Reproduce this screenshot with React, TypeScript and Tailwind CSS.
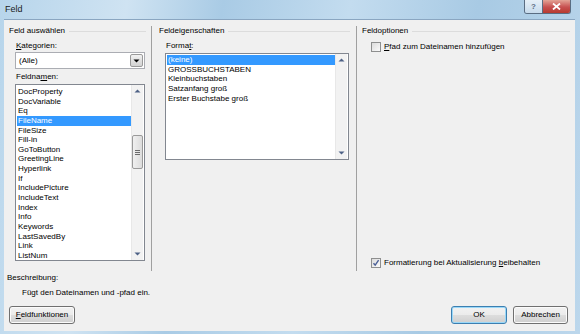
import React from "react";

const fieldNames = [
  "DocProperty",
  "DocVariable",
  "Eq",
  "FileName",
  "FileSize",
  "Fill-in",
  "GoToButton",
  "GreetingLine",
  "Hyperlink",
  "If",
  "IncludePicture",
  "IncludeText",
  "Index",
  "Info",
  "Keywords",
  "LastSavedBy",
  "Link",
  "ListNum",
];

const formats = [
  "(keine)",
  "GROSSBUCHSTABEN",
  "Kleinbuchstaben",
  "Satzanfang groß",
  "Erster Buchstabe groß",
];

function Arrow({ up }: { up?: boolean }) {
  return (
    <svg width="7" height="4" viewBox="0 0 7 4" className="block">
      {up ? (
        <path d="M0.5 3.5 L3.5 0.5 L6.5 3.5 Z" fill="#4d6185" />
      ) : (
        <path d="M0.5 0.5 L3.5 3.5 L6.5 0.5 Z" fill="#4d6185" />
      )}
    </svg>
  );
}

function Header({ text }: { text: string }) {
  return (
    <div className="flex items-center h-[10px] leading-[10px]">
      <span className="pr-[4px] whitespace-nowrap">{text}</span>
      <div className="flex-1 h-px bg-[#dcdcdc]" />
    </div>
  );
}

function CheckBox({ checked }: { checked?: boolean }) {
  return (
    <div className="w-[10px] h-[10px] border border-[#8e8f8f] bg-gradient-to-br from-[#dcdcdc] to-[#fbfbfb] flex items-center justify-center">
      {checked && (
        <svg width="8" height="8" viewBox="0 0 8 8">
          <path d="M1.5 4.2 L3.2 6.2 L6.6 1.2" stroke="#4a5f97" strokeWidth="1.4" fill="none" />
        </svg>
      )}
    </div>
  );
}

function Btn({ children, w, def }: { children: React.ReactNode; w: string; def?: boolean }) {
  return (
    <div
      className={`${w} h-[18px] rounded-[3px] border ${
        def ? "border-[#3c7fb1] shadow-[inset_0_0_0_1px_#9ad8f8]" : "border-[#707070] shadow-[inset_0_0_0_1px_#fbfbfb]"
      } bg-[linear-gradient(to_bottom,#f2f2f2_0%,#ebebeb_50%,#dddddd_51%,#cfcfcf_100%)] flex items-center justify-center leading-none`}
    >
      {children}
    </div>
  );
}

export default function App() {
  return (
    <div
      className="w-[580px] h-[334px] relative overflow-hidden text-[8px] text-black bg-[linear-gradient(100deg,#b7d5eb_0%,#cfe3f2_20%,#a9cbe5_35%,#c3dcef_55%,#a8cae4_75%,#bcd7ec_100%)]"
      style={{ fontFamily: '"Liberation Sans", Arial, sans-serif' }}
    >
      {/* title bar */}
      <div className="h-[19px] flex items-center pl-[5px] text-[9px] text-[#1b1b1b]">Feld</div>
      <div className="absolute top-0 right-[9px] flex h-[14px] rounded-b-[3px] border border-t-0 border-[#5a6d82] overflow-hidden">
        <div className="w-[18px] h-full bg-[linear-gradient(to_bottom,#e6eff7,#c7dbec)] border-r border-[#5a6d82] flex items-center justify-center text-[8px] text-[#5d6f84] font-bold">
          ?
        </div>
        <div className="w-[27px] h-full bg-[linear-gradient(to_bottom,#e3a496,#c75050_55%,#b73a2f)] flex items-center justify-center">
          <svg width="9" height="7" viewBox="0 0 9 7">
            <path d="M1 0.5 L8 6.5 M8 0.5 L1 6.5" stroke="#ffffff" strokeWidth="1.8" />
          </svg>
        </div>
      </div>

      {/* client area */}
      <div className="ml-[4px] w-[571px] h-[312px] bg-[#f0f0f0] border-t border-[#8aa6c1] flex flex-col">
        <div className="mt-[6px] h-[245px] flex">
          {/* column 1 */}
          <div className="w-[147px] flex flex-col pl-[5px] pr-[5px]">
            <Header text="Feld auswählen" />
            <div className="mt-[5px] pl-[7px] h-[10px] leading-[10px]">
              <span className="underline">K</span>ategorien:
            </div>
            <div className="mt-[1px] ml-[6px] w-[130px] h-[17px] bg-white border border-[#abadb3] flex items-center">
              <span className="pl-[3px] flex-1">(Alle)</span>
              <div className="w-[13px] h-[13px] mr-[1px] border border-[#9a9a9a] rounded-[2px] bg-[linear-gradient(to_bottom,#f3f3f3,#e0e0e0_50%,#d3d3d3)] flex items-center justify-center">
                <svg width="7" height="4" viewBox="0 0 7 4">
                  <path d="M0.5 0.5 L3.5 3.5 L6.5 0.5 Z" fill="#000" />
                </svg>
              </div>
            </div>
            <div className="mt-[3px] pl-[7px] h-[10px] leading-[10px]">
              Feldna<span className="underline">m</span>en:
            </div>
            <div className="mt-[2px] ml-[6px] w-[130px] h-[177px] bg-white border border-[#828790] flex">
              <div className="flex-1 pt-[2px] pl-[1px] overflow-hidden">
                {fieldNames.map((n) => (
                  <div
                    key={n}
                    className={`h-[9.65px] leading-[9.65px] pl-[1px] whitespace-nowrap ${
                      n === "FileName" ? "bg-[#3399ff] text-white" : ""
                    }`}
                  >
                    {n}
                  </div>
                ))}
              </div>
              <div className="w-[12px] mr-[1px] bg-[#f2f2f2] border-l border-[#e8e8e8] flex flex-col items-center">
                <div className="h-[12px] flex items-center justify-center">
                  <Arrow up />
                </div>
                <div className="mt-[38px] w-[11px] h-[34px] rounded-[2px] border border-[#9a9a9a] bg-[linear-gradient(to_right,#f0f0f0,#dcdcdc)] flex flex-col items-center justify-center gap-[1px]">
                  <div className="w-[5px] h-px bg-[#6c6c6c]" />
                  <div className="w-[5px] h-px bg-[#6c6c6c]" />
                  <div className="w-[5px] h-px bg-[#6c6c6c]" />
                </div>
                <div className="mt-auto h-[12px] flex items-center justify-center">
                  <Arrow />
                </div>
              </div>
            </div>
          </div>

          {/* column 2 */}
          <div className="w-[205px] border-l border-[#a0a0a0] flex flex-col pl-[7px] pr-[6px]">
            <Header text="Feldeigenschaften" />
            <div className="mt-[5px] pl-[7px] h-[10px] leading-[10px]">
              Forma<span className="underline">t</span>:
            </div>
            <div className="mt-[2px] ml-[6px] w-[184px] h-[107px] bg-white border border-[#828790] flex">
              <div className="flex-1 pt-[1px] pl-[1px]">
                {formats.map((f, i) => (
                  <div
                    key={f}
                    className={`h-[9.7px] leading-[9.7px] pl-[1px] whitespace-nowrap ${
                      i === 0 ? "bg-[#3399ff] text-white" : ""
                    }`}
                  >
                    {f}
                  </div>
                ))}
              </div>
              <div className="w-[12px] mr-[1px] bg-[#f2f2f2] border-l border-[#e8e8e8] flex flex-col items-center">
                <div className="h-[12px] flex items-center justify-center">
                  <Arrow up />
                </div>
                <div className="mt-auto h-[12px] flex items-center justify-center">
                  <Arrow />
                </div>
              </div>
            </div>
          </div>

          {/* column 3 */}
          <div className="flex-1 border-l border-[#a0a0a0] flex flex-col pl-[5px] pr-[5px]">
            <Header text="Feldoptionen" />
            <div className="mt-[6px] pl-[9px] flex items-center gap-[3px] h-[10px]">
              <CheckBox />
              <span className="leading-[10px]">
                <span className="underline">P</span>fad zum Dateinamen hinzufügen
              </span>
            </div>
            <div className="mt-auto mb-[3px] pl-[9px] flex items-center gap-[3px] h-[10px]">
              <CheckBox checked />
              <span className="leading-[10px]">
                Formatierung bei Aktualisierung <span className="underline">b</span>eibehalten
              </span>
            </div>
          </div>
        </div>

        {/* bottom */}
        <div className="mt-[2px] pl-[3px] h-[10px] leading-[10px]">Beschreibung:</div>
        <div className="mt-[5px] pl-[18px] h-[10px] leading-[10px]">Fügt den Dateinamen und -pfad ein.</div>
        <div className="mt-[8px] flex items-center pl-[5px] pr-[7px]">
          <Btn w="w-[66px]">
            <span>
              <span className="underline">F</span>eldfunktionen
            </span>
          </Btn>
          <div className="flex-1" />
          <Btn w="w-[56px]" def>
            OK
          </Btn>
          <div className="w-[6px]" />
          <Btn w="w-[55px]">Abbrechen</Btn>
        </div>
      </div>
    </div>
  );
}
